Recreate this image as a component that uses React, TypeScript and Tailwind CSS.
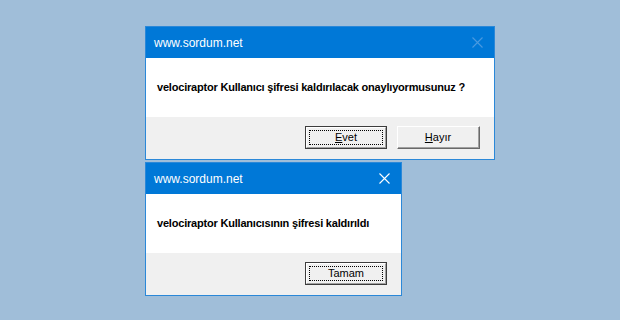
import React from "react";

function CloseX({ color }: { color: string }) {
  return (
    <svg width="11" height="11" viewBox="0 0 11 11" className="block">
      <path d="M0.5 0.5 L10.5 10.5 M10.5 0.5 L0.5 10.5" stroke={color} strokeWidth="1.1" />
    </svg>
  );
}

function Btn({ children, focused }: { children: React.ReactNode; focused?: boolean }) {
  if (focused) {
    return (
      <div className="w-[82px] h-[23px] border border-[#3c3c3c] bg-[#f0f0f0] p-0">
        <div className="w-full h-full border-t border-l border-white border-r border-b border-r-[#a0a0a0] border-b-[#a0a0a0] p-[2px]">
          <div className="w-full h-full border border-dotted border-black flex items-center justify-center text-[11px] text-black leading-none">
            {children}
          </div>
        </div>
      </div>
    );
  }
  return (
    <div className="w-[83px] h-[23px] border-t border-l border-white border-r border-b border-r-[#696969] border-b-[#696969] bg-[#f0f0f0]">
      <div className="w-full h-full border-r border-b border-[#a0a0a0] flex items-center justify-center text-[11px] text-black leading-none">
        {children}
      </div>
    </div>
  );
}

function Dialog({
  width,
  message,
  buttons,
  closeColor,
}: {
  width: string;
  message: string;
  buttons: React.ReactNode;
  closeColor: string;
}) {
  return (
    <div className={`${width} border border-[#2b88d8] flex flex-col`}>
      <div className="h-[31px] bg-[#0078d7] flex items-center justify-between pl-[8px] pr-[11px]">
        <span className="text-white text-[12px]">www.sordum.net</span>
        <CloseX color={closeColor} />
      </div>
      <div className="h-[59px] bg-white flex items-center pl-[11px]">
        <span className="text-[11px] font-bold text-black whitespace-nowrap tracking-[-0.2px]">{message}</span>
      </div>
      <div className="h-[42px] bg-[#f0f0f0] flex items-center justify-end pr-[14px] gap-[10px] pb-[1px]">
        {buttons}
      </div>
    </div>
  );
}

export default function App() {
  return (
    <div
      className="w-[620px] h-[320px] bg-[#a0bed9] flex flex-col items-start pl-[145px] pt-[26px] gap-[2px]"
      style={{ fontFamily: '"Liberation Sans", Arial, sans-serif' }}
    >
      <Dialog
        width="w-[350px]"
        message="velociraptor Kullanıcı şifresi kaldırılacak onaylıyormusunuz ?"
        closeColor="#4a9ae0"
        buttons={
          <>
            <Btn focused>
              <span>
                <span className="underline">E</span>vet
              </span>
            </Btn>
            <Btn>
              <span>
                <span className="underline">H</span>ayır
              </span>
            </Btn>
          </>
        }
      />
      <Dialog
        width="w-[257px]"
        message="velociraptor Kullanıcısının şifresi kaldırıldı"
        closeColor="#ffffff"
        buttons={<Btn focused>Tamam</Btn>}
      />
    </div>
  );
}
